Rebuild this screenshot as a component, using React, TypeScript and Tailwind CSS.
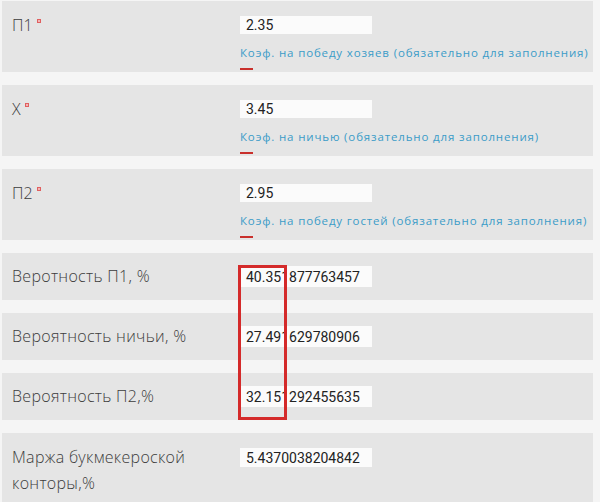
const inputs = [
  { label: "П1", value: "2.35", hint: "Коэф. на победу хозяев (обязательно для заполнения)" },
  { label: "X", value: "3.45", hint: "Коэф. на ничью (обязательно для заполнения)" },
  { label: "П2", value: "2.95", hint: "Коэф. на победу гостей (обязательно для заполнения)" },
];

const results = [
  { label: "Веротность П1, %", value: "40.351877763457" },
  { label: "Вероятность ничьи, %", value: "27.491629780906" },
  { label: "Вероятность П2,%", value: "32.151292455635" },
];

function Field({ value, className = "" }: { value: string; className?: string }) {
  return (
    <div
      className={`w-[132px] bg-[#fbfbfb] pl-[6px] font-['Roboto',sans-serif] text-[14px] leading-none text-[#222] flex items-center ${className}`}
    >
      {value}
    </div>
  );
}

export default function App() {
  return (
    <div className="relative h-[502px] w-[600px] overflow-hidden bg-[#f5f5f5] pt-px font-['Open_Sans',sans-serif] text-[#3c3c3c]">
      <div className="ml-[2px] flex w-[591px] flex-col gap-[13px]">
        {inputs.map((r) => (
          <div key={r.label} className="flex h-[71px] bg-[#e5e5e5]">
            <div className="w-[238px] shrink-0 pl-[10px] pt-[14px] text-[16px] font-light leading-[20px]">
              {r.label}
              <span className="relative -top-[8px] ml-[4px] inline-block h-[4px] w-[4px] border border-[#e06060] bg-[#f3b5b5]" />
            </div>
            <div className="flex flex-col pt-[15px]">
              <Field value={r.value} className="h-[18px]" />
              <div className="mt-[12px] whitespace-nowrap text-[11.5px] leading-[14px] tracking-[0.85px] text-[#3b9cc8]">
                {r.hint}
              </div>
              <div className="mt-[8px] h-[2px] w-[13px] bg-[#c9302c]" />
            </div>
          </div>
        ))}
        {results.map((r) => (
          <div key={r.label} className="flex h-[47px] bg-[#e5e5e5]">
            <div className="w-[238px] pl-[10px] pt-[13px] text-[16px] font-light leading-[20px] tracking-[0.3px]">
              {r.label}
            </div>
            <div className="pt-[13px]">
              <Field value={r.value} className="h-[21px]" />
            </div>
          </div>
        ))}
        <div className="flex h-[80px] bg-[#e5e5e5]">
          <div className="w-[238px] pl-[10px] pt-[11px] text-[16px] font-light leading-[26px] tracking-[0.3px]">
            Маржа букмекероской
            <br />
            конторы,%
          </div>
          <div className="pt-[15px]">
            <Field value="5.4370038204842" className="h-[19px]" />
          </div>
        </div>
      </div>
      <div className="absolute left-[238px] top-[265px] h-[155px] w-[49px] border-[3px] border-[#d42a2a]" />
    </div>
  );
}
